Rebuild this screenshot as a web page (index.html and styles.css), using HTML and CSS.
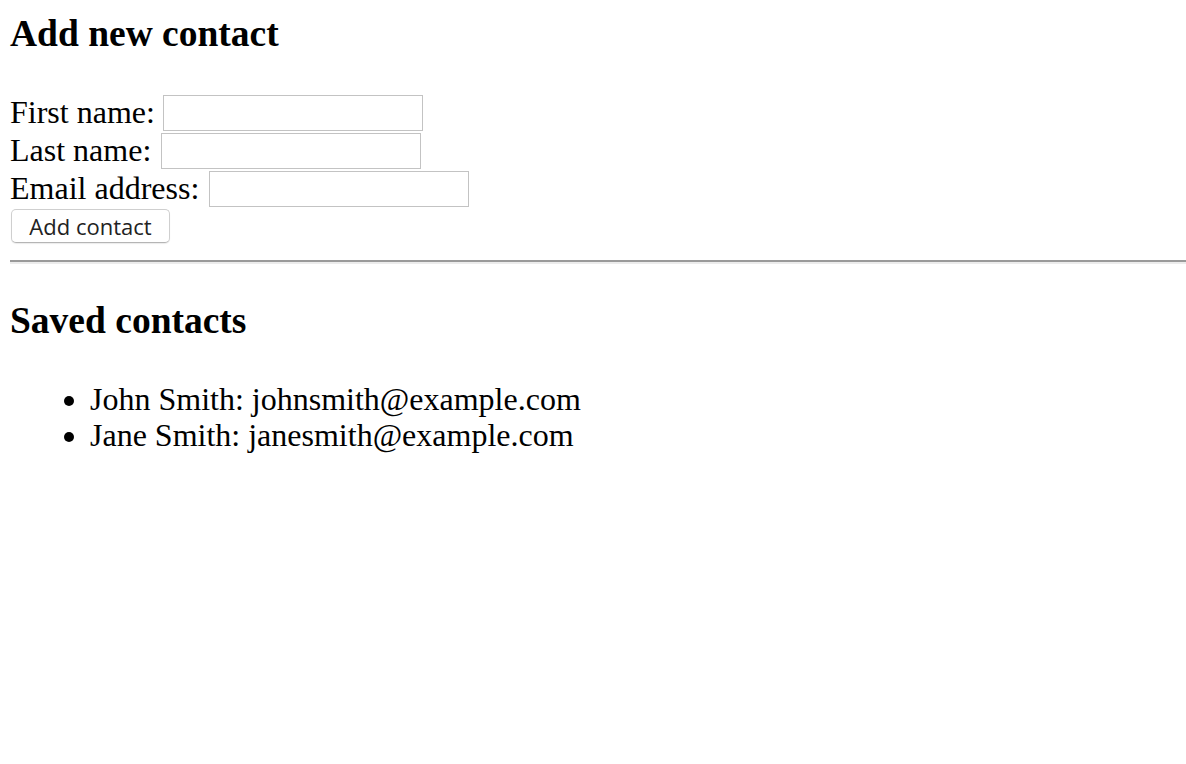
FILE: index.html
```html
<!DOCTYPE html>
<html>
<head>
<meta charset="utf-8">
<link rel="stylesheet" href="styles.css">
</head>
<body>
<h1 class="title">Add new contact</h1>
<form class="contact-form">
  <div class="row"><label>First name:</label><input class="field" type="text"></div>
  <div class="row row-wide"><label>Last name:</label><input class="field" type="text"></div>
  <div class="row row-wide"><label>Email address:</label><input class="field" type="text"></div>
  <div class="btn-row"><button class="btn" type="button">Add contact</button></div>
</form>
<hr class="divider">
<h2 class="title title-saved">Saved contacts</h2>
<ul class="contacts">
  <li>John Smith: johnsmith@example.com</li>
  <li>Jane Smith: janesmith@example.com</li>
</ul>
</body>
</html>
```
FILE: styles.css
```css
html, body {
  background: #fff;
}
body {
  margin: 0;
  padding: 0 0 0 10px;
  font-family: "Liberation Serif", "Times New Roman", serif;
  font-size: 32px;
  color: #000;
}
.title {
  font-family: "Liberation Serif", "Times New Roman", serif;
  font-size: 37.5px;
  font-weight: bold;
  line-height: 43px;
  margin: 12px 0 39px 0;
}
.contact-form {
  margin: 0;
}
.row {
  display: flex;
  align-items: flex-start;
  height: 38px;
  gap: 8px;
}
.row-wide {
  gap: 10px;
}
.row label {
  line-height: 37px;
  white-space: nowrap;
}
.field {
  box-sizing: border-box;
  width: 260px;
  height: 36px;
  margin: 1px 0 0 0;
  border: 1px solid #c3c3c3;
  background: #fff;
  padding: 0;
}
.btn-row {
  display: flex;
  padding: 1px 0 0 1px;
}
.btn {
  box-sizing: border-box;
  width: 159px;
  height: 34px;
  margin: 0;
  padding: 0;
  border: 1px solid #cfcfcf;
  border-bottom-color: #b5b5b5;
  border-radius: 5px;
  background: #fff;
  box-shadow: 0 1px 1px rgba(0,0,0,0.08);
  font-family: "Open Sans", "Liberation Sans", sans-serif;
  font-size: 22px;
  color: #222;
  line-height: 30px;
}
.divider {
  margin: 17px 0 0 0;
  border: 0;
  border-top: 2px solid #9a9a9a;
  border-bottom: 2px solid #ececec;
  height: 0;
}
.title-saved {
  margin: 35px 0 39px 0;
}
.contacts {
  margin: 0;
  padding: 0 0 0 80px;
  list-style: disc;
}
.contacts li {
  line-height: 36px;
}
```
